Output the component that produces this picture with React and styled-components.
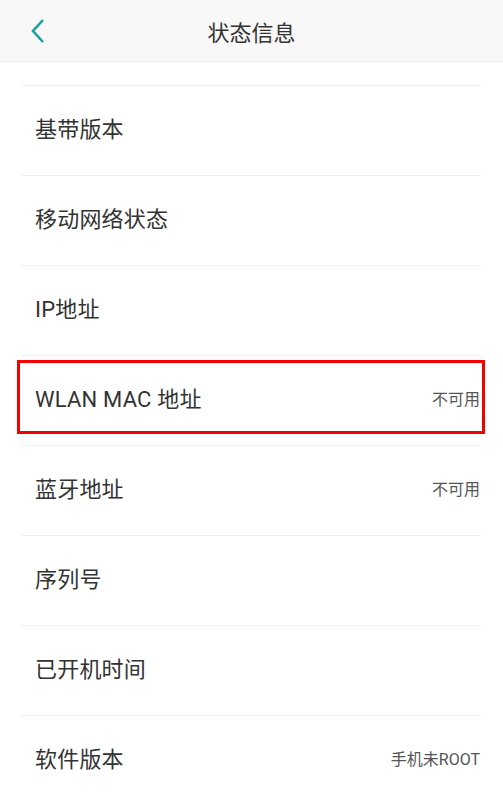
import React from 'react';
import styled, { createGlobalStyle } from 'styled-components';

const GlobalStyle = createGlobalStyle`
  body {
    margin: 0;
    background: #fff;
    font-family: Roboto, "Noto Sans CJK SC", sans-serif;
    overflow: hidden;
  }
`;

const Page = styled.div`
  width: 503px;
  height: 800px;
  overflow: hidden;
  background: #fff;
`;

const TopBar = styled.header`
  height: 61px;
  background: #f8f8f8;
  border-bottom: 1px solid #ececec;
  display: grid;
  grid-template-columns: 60px 1fr 60px;
  align-items: center;
`;

const BackButton = styled.button`
  border: none;
  background: none;
  padding: 0 0 0 30px;
  height: 100%;
  display: flex;
  align-items: center;
`;

const Title = styled.h1`
  margin: 0;
  text-align: center;
  font-size: 22px;
  font-weight: 400;
  color: #333;
`;

const List = styled.ul`
  list-style: none;
  margin: 0;
  padding: 23px 22px 0;
`;

const Row = styled.li`
  position: relative;
  box-sizing: border-box;
  height: 90px;
  border-top: 1px solid #efefef;
  display: flex;
  align-items: center;
  justify-content: space-between;
  padding: 0 1px 2px 13px;
  line-height: 1;

  ${({ $highlight }) =>
    $highlight &&
    `
    &::after {
      content: '';
      position: absolute;
      top: 4px;
      bottom: 11px;
      left: -5px;
      right: -4px;
      border: 3px solid #f40000;
    }
  `}
`;

const Label = styled.span`
  font-size: 22px;
  color: #333;
  letter-spacing: 0.2px;
`;

const Value = styled.span`
  font-size: 16px;
  color: #555;
`;

const rows = [
  { label: '基带版本' },
  { label: '移动网络状态' },
  { label: 'IP地址' },
  { label: 'WLAN MAC 地址', value: '不可用', highlight: true },
  { label: '蓝牙地址', value: '不可用' },
  { label: '序列号' },
  { label: '已开机时间' },
  { label: '软件版本', value: '手机未ROOT' },
];

const App = () => {
  return (
    <Page>
      <GlobalStyle />
      <TopBar>
        <BackButton aria-label="返回">
          <svg width="16" height="26" viewBox="0 0 16 26">
            <path d="M13 2 L3 13 L13 24" fill="none" stroke="#17a39b" strokeWidth="2.6" />
          </svg>
        </BackButton>
        <Title>状态信息</Title>
        <span />
      </TopBar>
      <List>
        {rows.map((r) => (
          <Row key={r.label} $highlight={r.highlight}>
            <Label>{r.label}</Label>
            {r.value && <Value>{r.value}</Value>}
          </Row>
        ))}
      </List>
    </Page>
  );
};

export default App;
